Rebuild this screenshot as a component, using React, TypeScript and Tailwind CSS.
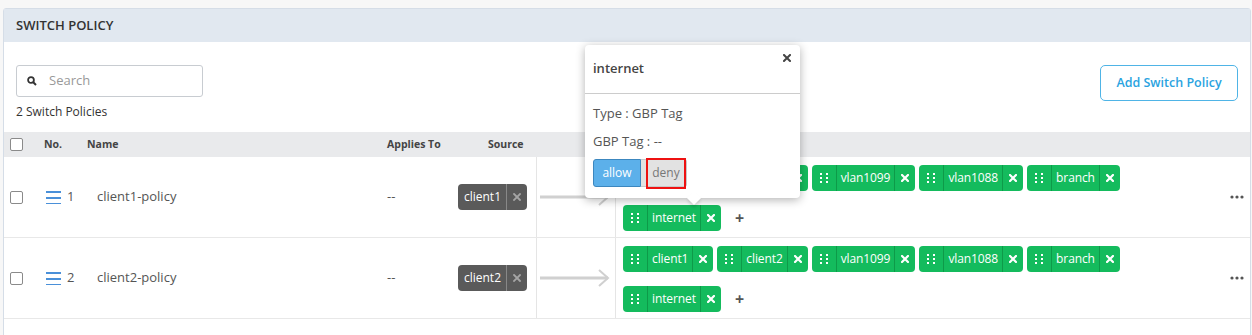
import React from "react";

const font = { fontFamily: '"Open Sans", "Liberation Sans", sans-serif' };

function Dots() {
  return (
    <svg width="8" height="10" viewBox="0 0 8 10">
      {[0, 4, 8].map((y) =>
        [0, 6].map((x) => <rect key={`${x}-${y}`} x={x} y={y} width="2" height="2" fill="#fff" />)
      )}
    </svg>
  );
}

function XIcon({ color = "#fff", size = 8, sw = 2.2 }: { color?: string; size?: number; sw?: number }) {
  return (
    <svg width={size} height={size} viewBox="0 0 8 8">
      <path d="M1 1L7 7M7 1L1 7" stroke={color} strokeWidth={sw} strokeLinecap="square" />
    </svg>
  );
}

function GreenChip({ label }: { label: string }) {
  return (
    <div className="flex h-[26px] items-stretch rounded-[4px] bg-[#14bb5d] text-[12px] text-white">
      <div className="flex w-[25px] items-center justify-center border-r border-[#0e9a49]">
        <Dots />
      </div>
      <div className="flex items-center px-[4px] tracking-[-0.1px]">{label}</div>
      <div className="flex w-[21px] items-center justify-center border-l border-[#0e9a49]">
        <XIcon />
      </div>
    </div>
  );
}

function SourceChip({ label }: { label: string }) {
  return (
    <div className="flex h-[26px] items-stretch rounded-[4px] bg-[#5a5a5a] text-[12px] text-white">
      <div className="flex items-center pl-[6px] pr-[5px]">{label}</div>
      <div className="flex w-[21px] items-center justify-center border-l border-[#888]">
        <XIcon color="#a5a5a5" sw={1.8} />
      </div>
    </div>
  );
}

function Arrow() {
  return (
    <svg width="72" height="20" viewBox="0 0 72 20">
      <path d="M0 10H68" stroke="#d0d0d0" strokeWidth="3" />
      <path d="M59 2L68 10L59 18" stroke="#d0d0d0" strokeWidth="2" fill="none" />
    </svg>
  );
}

function Hamburger() {
  return (
    <svg width="15" height="13" viewBox="0 0 15 13">
      <rect x="0" y="0" width="15" height="2" fill="#4a90d9" />
      <rect x="0" y="6" width="15" height="2" fill="#4a90d9" />
      <rect x="0" y="12" width="15" height="1.6" fill="#4a90d9" />
    </svg>
  );
}

function Checkbox() {
  return <div className="h-[13px] w-[13px] rounded-[2px] border border-[#8a8a8a] bg-white" />;
}

function Row({ n, name, src }: { n: number; name: string; src: string }) {
  const dests = ["client1", "client2", "vlan1099", "vlan1088", "branch", "internet"];
  return (
    <div className="flex items-stretch border-b border-[#e8e8e8] text-[13px] text-[#555]">
      <div className="flex w-[32px] items-center pl-[6px]">
        <Checkbox />
      </div>
      <div className="flex w-[43px] items-center gap-[6px] pl-[10px]">
        <Hamburger />
        <span>{n}</span>
      </div>
      <div className="flex w-[300px] items-center pl-[18px]">{name}</div>
      <div className="flex w-[61px] items-center pl-[8px]">--</div>
      <div className="flex w-[96px] items-center justify-end pr-[9px]">
        <SourceChip label={src} />
      </div>
      <div className="flex w-[80px] items-center justify-center border-x border-[#e5e5e5]">
        <Arrow />
      </div>
      <div className="flex w-[604px] flex-wrap items-center gap-x-[4px] gap-y-[14px] pb-[6px] pl-[7px] pt-[8px]">
        {dests.map((d) => (
          <GreenChip key={d} label={d} />
        ))}
        <span className="ml-[10px] text-[16px] font-bold leading-none text-[#555]">+</span>
      </div>
      <div className="flex flex-1 items-center justify-end pr-[6px]">
        <svg width="14" height="4" viewBox="0 0 14 4">
          <circle cx="2" cy="2" r="1.6" fill="#555" />
          <circle cx="7" cy="2" r="1.6" fill="#555" />
          <circle cx="12" cy="2" r="1.6" fill="#555" />
        </svg>
      </div>
    </div>
  );
}

export default function App() {
  return (
    <div className="h-[335px] w-[1252px] overflow-hidden bg-[#f7f7f7] pt-[8px]" style={font}>
      <div className="relative ml-[3px] h-[400px] w-[1248px] rounded-t-[3px] border border-[#d5dde7] bg-white">
        <div className="flex h-[33px] items-center bg-[#e1e8f0] pl-[12px] text-[13px] font-semibold text-[#333]">
          SWITCH POLICY
        </div>
        <div className="flex justify-between px-[12px] pt-[23px]">
          <div>
            <div className="flex h-[32px] w-[187px] items-center rounded-[3px] border border-[#c8ccd1] pl-[10px]">
              <svg width="10" height="10" viewBox="0 0 10 10">
                <circle cx="4" cy="4" r="2.9" stroke="#333" strokeWidth="1.8" fill="none" />
                <path d="M6 6L9 9" stroke="#333" strokeWidth="2" />
              </svg>
              <span className="ml-[12px] text-[13px] text-[#999]">Search</span>
            </div>
            <div className="mt-[6px] text-[12px] text-[#333]">2 Switch Policies</div>
          </div>
          <div className="flex h-[36px] w-[138px] items-center justify-center rounded-[5px] border border-[#4fb4e6] text-[12.5px] font-semibold text-[#2aa3df]">
            Add Switch Policy
          </div>
        </div>
        <div className="mt-[11px] flex h-[25px] items-center whitespace-nowrap bg-[#e9eaec] text-[10.5px] font-bold text-[#444]">
          <div className="flex w-[32px] items-center pl-[6px]">
            <Checkbox />
          </div>
          <div className="w-[43px] pl-[8px]">No.</div>
          <div className="w-[300px] pl-[8px]">Name</div>
          <div className="w-[61px] pl-[8px]">Applies To</div>
          <div className="w-[96px] pl-[48px]">Source</div>
        </div>
        <Row n={1} name="client1-policy" src="client1" />
        <Row n={2} name="client2-policy" src="client2" />

        <div className="absolute left-[581px] top-[36px] h-[153px] w-[215px] rounded-[4px] bg-white shadow-[0_2px_10px_rgba(0,0,0,0.3)]">
          <div className="relative flex h-[49px] items-center border-b border-[#ccc] px-[8px] text-[13px] font-semibold text-[#444]">
            internet
            <span className="absolute right-[9px] top-[9px]">
              <XIcon color="#444" size={8} sw={2} />
            </span>
          </div>
          <div className="px-[8px] pt-[10px] text-[13px] text-[#555]">
            <div className="leading-[18px]">Type : GBP Tag</div>
            <div className="mt-[10px] leading-[18px]">GBP Tag : --</div>
            <div className="mt-[9px] flex">
              <div className="flex h-[28px] w-[48px] items-center justify-center rounded-l-[3px] border border-[#3c87bf] bg-[#5cb0ea] text-[12px] text-white">
                allow
              </div>
              <div className="flex h-[28px] w-[46px] items-center justify-end rounded-r-[3px] border border-l-0 border-[#c8c8c8] bg-[#e2e2e2]">
                <div className="-my-[2px] flex h-[31px] w-[40px] items-center justify-center border-2 border-[#e11] text-[12px] text-[#777]">
                  deny
                </div>
              </div>
            </div>
          </div>
          <div className="absolute left-[104px] top-[148px] h-[10px] w-[10px] rotate-45 bg-white shadow-[2px_2px_3px_rgba(0,0,0,0.12)]" />
        </div>
      </div>
    </div>
  );
}
